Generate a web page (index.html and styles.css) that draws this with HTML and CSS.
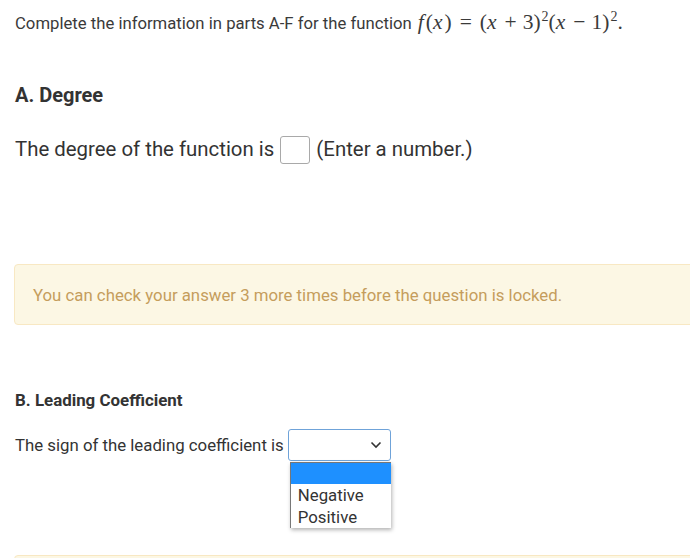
FILE: index.html
```html
<!doctype html>
<html lang="en">
<head>
    <meta charset="utf-8">
    <title>Question</title>
    <link rel="stylesheet" href="styles.css">
</head>
<body>

<div class="question">
    <p class="intro">
        Complete the information in parts A-F for the function
        <span class="math"><i>f</i>(<i>x</i>)<span class="rel">=</span>(<i>x</i><span class="bin">+</span>3)<sup>2</sup>(<i>x</i><span class="bin">−</span>1)<sup>2</sup>.</span>
    </p>

    <!-- Part A -->
    <h3 class="part-title part-title-lg">A. Degree</h3>
    <p class="answer-line answer-line-lg">
        <span>The degree of the function is</span>
        <input type="text" class="num-input" aria-label="Degree">
        <span>(Enter a number.)</span>
    </p>

    <div class="alert">You can check your answer 3 more times before the question is locked.</div>

    <!-- Part B -->
    <h3 class="part-title">B. Leading Coefficient</h3>
    <div class="answer-line">
        <span>The sign of the leading coefficient is</span>
        <span class="select-wrap">
            <span class="select-box">
                <svg class="chevron" width="12" height="8" viewBox="0 0 12 8"><path d="M1.5 1.5 6 6l4.5-4.5" fill="none" stroke="#333" stroke-width="1.6"/></svg>
            </span>
            <span class="select-menu">
                <span class="option option-active">&nbsp;</span>
                <span class="option">Negative</span>
                <span class="option">Positive</span>
            </span>
        </span>
    </div>

    <div class="alert alert-next"></div>
</div>

</body>
</html>
```

FILE: styles.css
```css
*, *::before, *::after {
    box-sizing: border-box;
}

body {
    margin: 0;
    padding: 0 0 0 15px;
    font-family: Roboto, "Liberation Sans", Arial, sans-serif;
    color: #333;
    background: #fff;
    overflow: hidden;
}

.question {
    width: 700px;
}

.intro {
    margin: 10px 0 0;
    font-size: 16.7px;
    line-height: 24px;
    color: #3a3a3a;
}

/* Формула в стиле KaTeX */
.math {
    font-family: "Liberation Serif", "DejaVu Serif", serif;
    font-size: 21.5px;
    margin-left: 2px;
}

.math i {
    padding-right: 2px;
}

.math .rel {
    padding: 0 8px;
}

.math .bin {
    padding: 0 6px;
}

.math sup {
    font-size: 14px;
    line-height: 0;
    padding-left: 1px;
}

.part-title {
    margin: 0;
    font-weight: 700;
    font-size: 16.9px;
    line-height: 22px;
}

.part-title-lg {
    margin-top: 48px;
    font-size: 20px;
}

.answer-line {
    display: flex;
    align-items: center;
    gap: 4px;
    margin: 18px 0 0;
    font-size: 16.8px;
    line-height: 32px;
}

.answer-line-lg {
    gap: 6px;
    margin-top: 28px;
    font-size: 20.4px;
    line-height: 30px;
}

.num-input {
    width: 30px;
    height: 28px;
    margin: 1px 0 0;
    padding: 0;
    border: 1px solid #a9a9a9;
    border-radius: 3px;
    background: #fff;
}

.alert {
    margin: 100px 0 0 -1px;
    height: 61px;
    padding: 18px 18px;
    background: #fcf7e4;
    border: 1px solid #f8e8c3;
    border-radius: 4px;
    color: #c59d5c;
    font-size: 16.8px;
    line-height: 24px;
}

.alert + .part-title {
    margin-top: 64px;
}

.select-wrap {
    position: relative;
    display: block;
}

.select-box {
    display: flex;
    align-items: center;
    justify-content: flex-end;
    width: 103px;
    height: 32px;
    padding-right: 8px;
    border: 1px solid #6fa3d9;
    border-radius: 3px;
    background: #fff;
}

/* Открытый список вариантов */
.select-menu {
    position: absolute;
    top: 33px;
    left: 2px;
    width: 101px;
    display: flex;
    flex-direction: column;
    background: #fff;
    border-left: 1px solid #777;
    border-top: 1px solid #777;
    box-shadow: 1px 2px 4px rgba(0, 0, 0, 0.3);
}

.option {
    height: 22px;
    padding-left: 7px;
    font-size: 16.8px;
    line-height: 22px;
    color: #333;
}

.option-active {
    height: 21px;
    background: #1e90ff;
}

.alert-next {
    margin-top: 94px;
    height: 40px;
    padding: 0;
}
```
